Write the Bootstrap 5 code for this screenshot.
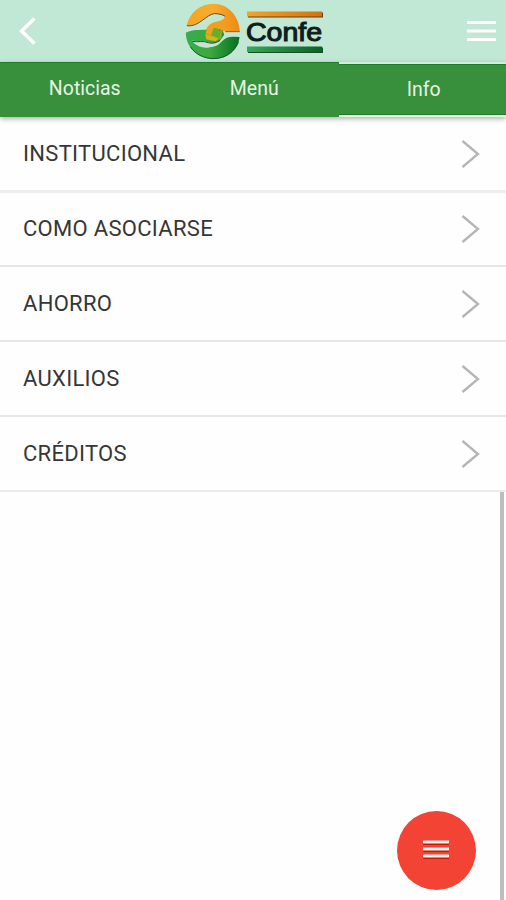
<!DOCTYPE html>
<html lang="es">
<head>
<meta charset="utf-8">
<meta name="viewport" content="width=device-width, initial-scale=1">
<title>Confe</title>
<link href="https://cdn.jsdelivr.net/npm/bootstrap@5.3.0/dist/css/bootstrap.min.css" rel="stylesheet">
<style>
body{font-family:Roboto,"Liberation Sans",sans-serif;background:#fefefe;height:900px;overflow:hidden}
.screen{height:900px}
.topbar{height:62px;background:#c1e7d5;padding:0 10px 0 19px}
.brand-logo{left:180px;top:0}
.tabs{height:55px;background:#388f3c;box-shadow:0 2px 5px rgba(0,0,0,.3);z-index:1;overflow-x:clip}
.tabs .nav-link{flex:0 0 169.500px;color:#e6f6e4;font-size:19.500px;line-height:52px;padding:0;border-radius:0;border-top:1px solid #1c7e25}
.tabs .nav-link.active{color:#e6f6e4;border-top:2px solid #d3eddd;border-bottom:2px solid #e6f4e6;line-height:51px;box-shadow:inset 0 1px #1c7e25,inset 0 -1px #1c7e25}
.options .list-group-item{height:74.8px;padding:1px 26px 0 23px;background:#fefefe;color:#363636;border:0 solid #e6e6e6;border-bottom-width:2px;font-size:22px;line-height:24px;letter-spacing:.3px}
.options .list-group-item:first-child{height:75.500px;padding-top:2px;border-bottom:3px solid #eee}
.options .list-group-item:last-child{border-bottom:2px solid #ebebeb}
.scroll-thumb{width:4px;background:#bdbdbd;margin-right:2px}
.fab{left:397px;top:811px;width:79px;height:79px;background:#f34334;border:0}
</style>
<script src="https://cdn.jsdelivr.net/npm/bootstrap@5.3.0/dist/js/bootstrap.bundle.min.js"></script>
</head>
<body>
<div class="screen d-flex flex-column position-relative">
  <header class="topbar d-flex align-items-center justify-content-between flex-shrink-0">
    <svg width="18" height="30" viewBox="0 0 18 30"><path d="M15.500 2.500 2.500 15l13 12.500" fill="none" stroke="#fff" stroke-width="3.600"/></svg>
    <svg class="brand-logo position-absolute" width="150" height="62" viewBox="0 0 150 62" role="img" aria-label="Confe">
      <defs>
        <linearGradient id="o" x2="1"><stop stop-color="#f5a51d"/><stop offset=".5" stop-color="#f9ab2c"/><stop offset="1" stop-color="#ee8a12"/></linearGradient>
        <linearGradient id="g" x2="1"><stop stop-color="#36ad50"/><stop offset=".45" stop-color="#3fa83c"/><stop offset="1" stop-color="#086f24"/></linearGradient>
        <linearGradient id="b" x2="1"><stop stop-color="#f4a32c"/><stop offset="1" stop-color="#d8700c"/></linearGradient>
        <linearGradient id="gb" x2="1"><stop stop-color="#35aa55"/><stop offset="1" stop-color="#0a6127"/></linearGradient>
      </defs>
      <g transform="translate(3.500 .3) scale(.33333)">
        <path d="M10 74C19 36 50 10 90 10c42 0 76 34 79 82l-42 1-58-7c6-13 18-20 34-23 12-2 18-8 22-15-10-5-19-8-33-9-13 2-22 11-34 19-15 10-30 20-48 16Z" fill="url(#o)"/>
        <path d="M28 84c18 0 27-10 40-19 16-12 28-20 57-17-5 10-11 12-24 14-17 3-27 10-34 22-13-3-25-2-39 0Z" fill="#c5e5c6"/>
        <path d="M10 76c18 3 33-6 48-17 12-8 21-17 34-19 12 0 24 2 33 8" fill="none" stroke="#574c2e" stroke-width="3"/>
        <path d="M125 94h44" stroke="#935c13" stroke-width="3"/>
        <path d="M7 97c14-7 29-9 60-9l10-8 40 8 5 15-13 20c-10 7-22 8-36 3-17-7-34 1-47-7 8 15 22 22 42 23 33 0 38-31 66-33 13-1 24 0 34 1-4 39-37 66-78 66-45 0-83-34-83-79Z" fill="url(#g)"/>
        <path d="M26 123c20 4 32-3 48 4 14 4 27 0 36-7 12-12 25-21 57-19v7c-39-2-46 10-59 22-17 17-66 12-82-7Z" fill="#c5e5d3"/>
        <path d="M26 123c20 4 32-3 48 4 14 4 27 0 36-7M21 140c15 22 40 34 69 35 35 0 63-20 75-50" fill="none" stroke="#155b2c" stroke-width="3"/>
        <path d="m76 81 41 9-4 25-17 8-31-15Z" fill="#86ae20"/>
        <path d="m72 79 15-12 40-7-7 33-13-9-16-2-8 23-17-6Z" fill="#efa020"/>
        <path d="m91 83 22 6-6 23-23-8Z" fill="#67ae2a"/>
        <path d="m66 101 19 6 20 8-10 8-27-6Z" fill="#d6b51c"/>
      </g>
      <path d="M68 12.500h75v5H68z" fill="#5b421c"/><path d="M67 11.500h75v5H67z" fill="url(#b)"/>
      <path d="M68 47.500h75v5.500H68z" fill="#184f27"/><path d="M67 46.500h75v5.500H67z" fill="url(#gb)"/>
      <text x="66" y="40.500" textLength="76" lengthAdjust="spacingAndGlyphs" font-family="Liberation Sans,sans-serif" font-size="26" fill="#101d18" stroke="#101d18" stroke-width="1.100">Confe</text>
    </svg>
    <svg width="29" height="22" viewBox="0 0 29 22"><path d="M0 2.500h29M0 11h29M0 19.500h29" stroke="#fff" stroke-width="3"/></svg>
  </header>
  <nav class="tabs nav flex-nowrap flex-shrink-0 position-relative text-center">
    <a class="nav-link" href="#">Noticias</a>
    <a class="nav-link" href="#">Menú</a>
    <a class="nav-link active" href="#" aria-current="page">Info</a>
  </nav>
  <div class="options list-group list-group-flush flex-shrink-0">
    <a href="#" class="list-group-item d-flex align-items-center justify-content-between"><span>INSTITUCIONAL</span><svg width="19" height="30" viewBox="0 0 19 30"><path d="m1.500 2 15.500 13-15.500 13" fill="none" stroke="#b5b5b5" stroke-width="2.300"/></svg></a>
    <a href="#" class="list-group-item d-flex align-items-center justify-content-between"><span>COMO ASOCIARSE</span><svg width="19" height="30" viewBox="0 0 19 30"><path d="m1.500 2 15.500 13-15.500 13" fill="none" stroke="#b5b5b5" stroke-width="2.300"/></svg></a>
    <a href="#" class="list-group-item d-flex align-items-center justify-content-between"><span>AHORRO</span><svg width="19" height="30" viewBox="0 0 19 30"><path d="m1.500 2 15.500 13-15.500 13" fill="none" stroke="#b5b5b5" stroke-width="2.300"/></svg></a>
    <a href="#" class="list-group-item d-flex align-items-center justify-content-between"><span>AUXILIOS</span><svg width="19" height="30" viewBox="0 0 19 30"><path d="m1.500 2 15.500 13-15.500 13" fill="none" stroke="#b5b5b5" stroke-width="2.300"/></svg></a>
    <a href="#" class="list-group-item d-flex align-items-center justify-content-between"><span>CRÉDITOS</span><svg width="19" height="30" viewBox="0 0 19 30"><path d="m1.500 2 15.500 13-15.500 13" fill="none" stroke="#b5b5b5" stroke-width="2.300"/></svg></a>
  </div>
  <div class="scroll-thumb flex-grow-1 align-self-end"></div>
  <button class="fab position-absolute rounded-circle d-flex align-items-center justify-content-center p-0" type="button" aria-label="Menú">
    <svg width="27" height="23" viewBox="0 0 27 23"><path d="M0 4.500h26M0 11.500h26M0 18.500h26" stroke="#c91608" stroke-width="3"/><path d="M0 3h26M0 10h26M0 17h26" stroke="#fff3ec" stroke-width="3"/></svg>
  </button>
</div>
</body>
</html>
